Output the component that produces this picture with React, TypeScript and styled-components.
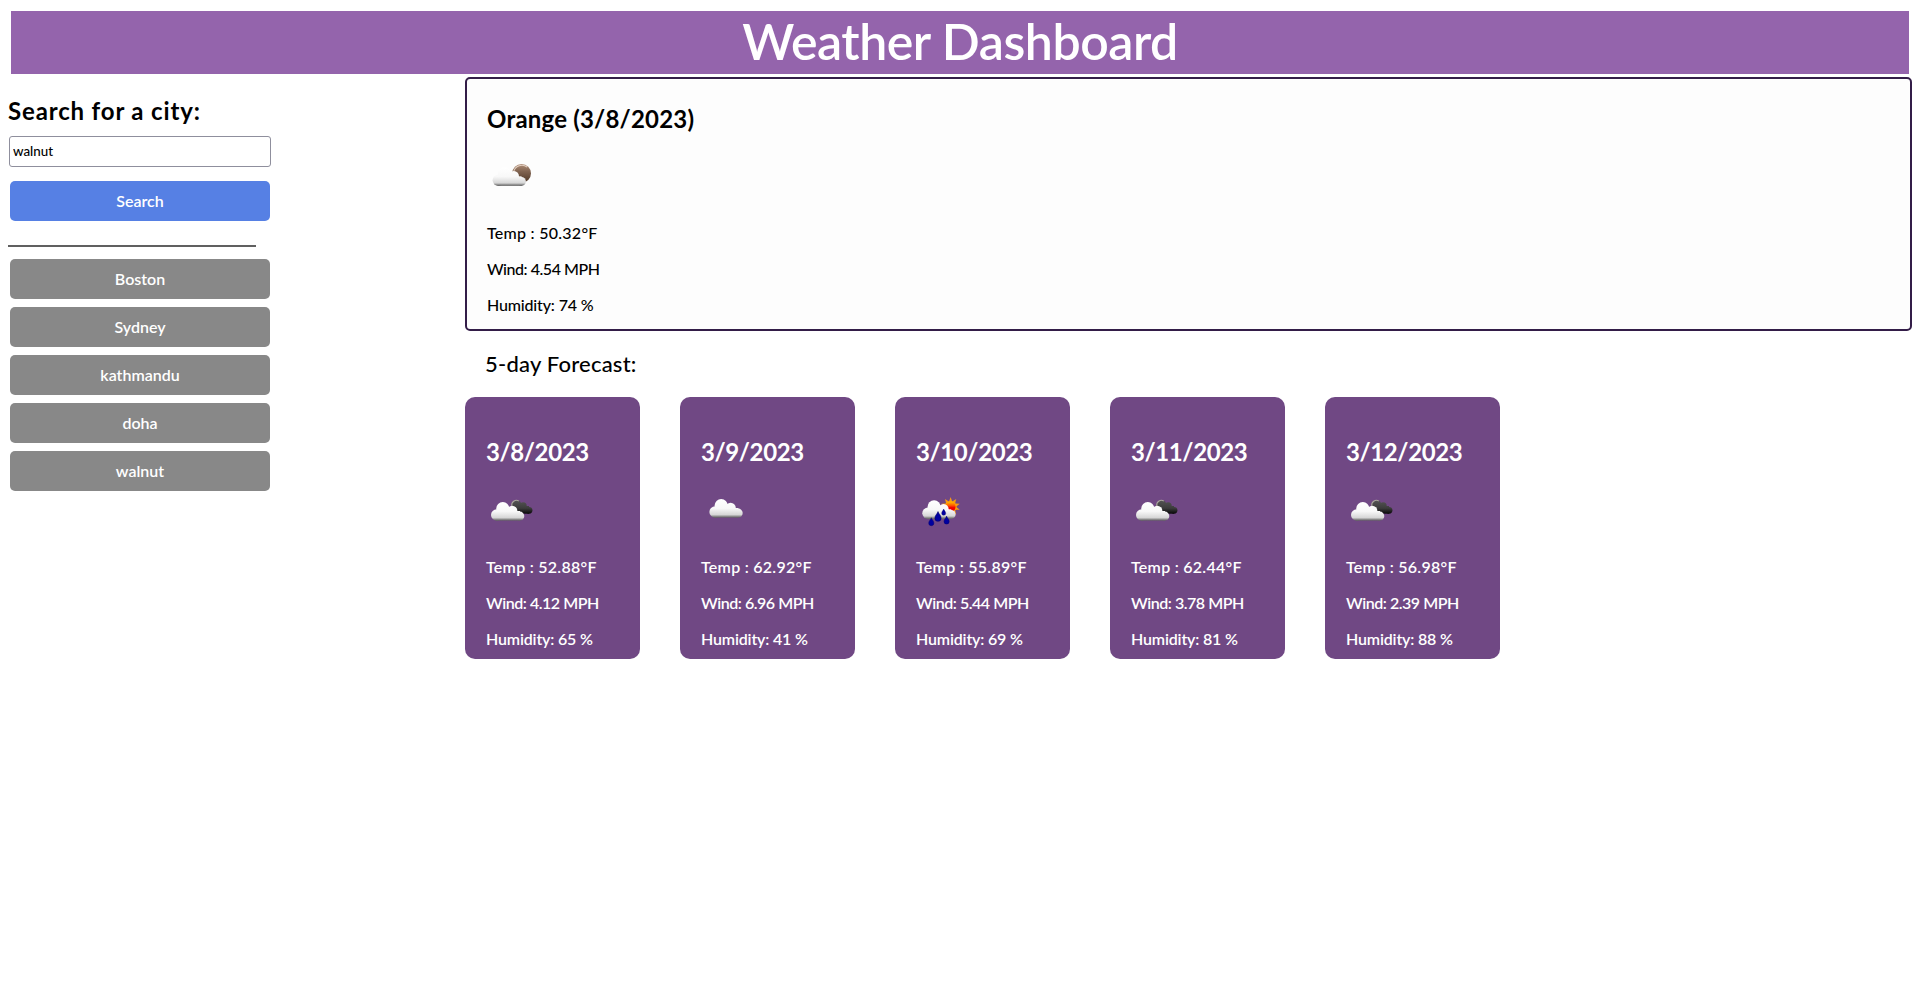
import React from 'react';
import styled, { createGlobalStyle } from 'styled-components';

const GlobalStyle = createGlobalStyle`
  *, *::before, *::after { box-sizing: border-box; }
  body {
    margin: 0;
    background: #fff;
    color: #000;
    font-family: 'Trebuchet MS', Lato, sans-serif;
    font-size: 16px;
  }
  h1, h2, h3, p { margin: 0; padding: 0; }
`;

const Header = styled.header`
  display: flex;
  align-items: center;
  justify-content: center;
  height: 63px;
  margin: 11px 11px 0;
  padding-bottom: 3px;
  background: #9464ac;
  color: #fff;
`;

const Title = styled.h1`
  font-size: 50px;
  font-weight: 600;
  line-height: 60px;
  letter-spacing: -0.45px;
`;

const Layout = styled.main`
  display: flex;
  padding: 3px 8px 0;
`;

const Sidebar = styled.aside`
  flex: 0 0 457px;
  padding-top: 20px;
`;

const SearchForm = styled.form`
  display: flex;
  flex-direction: column;
  width: 264px;
`;

const Heading = styled.h2<{ $tracking: number }>`
  font-size: 24px;
  font-weight: 700;
  line-height: 28px;
  letter-spacing: ${(p) => p.$tracking}px;
`;

const CityInput = styled.input`
  width: 262px;
  height: 31px;
  margin: 11px 1px 14px;
  padding: 0 3px 1px;
  border: 1px solid #8f8f9d;
  border-radius: 3px;
  background: #fff;
  color: #000;
  font: 500 13.33px 'Trebuchet MS', Lato, sans-serif;
`;

const Button = styled.button<{ $primary?: boolean }>`
  width: 260px;
  height: 40px;
  margin-left: 2px;
  padding: 0 0 2px;
  border: 0;
  border-radius: 5px;
  background: ${(p) => (p.$primary ? '#5680e4' : '#888')};
  color: #fff;
  font: 600 16px 'Trebuchet MS', Lato, sans-serif;
`;

const Divider = styled.div`
  width: 248px;
  height: 2px;
  margin: 24px 0 12px;
  background: #606060;
`;

const History = styled.div`
  display: flex;
  flex-direction: column;
  gap: 8px;
`;

const Content = styled.section`
  flex: 1;
`;

const IconSlot = styled.div`
  height: 50px;
  margin: 17px 0 23px;
  svg { display: block; }
`;

const CurrentCard = styled.article`
  height: 254px;
  padding: 26px 20px 13px;
  border: 2px solid #331d48;
  border-radius: 5px;
  background: #fdfdfd;
`;

const Readings = styled.div<{ $weight: number }>`
  display: flex;
  flex-direction: column;
  gap: 16px;
  font-weight: ${(p) => p.$weight};
  line-height: 20px;
  white-space: nowrap;
`;

const Reading = styled.p<{ $tracking: number }>`
  letter-spacing: ${(p) => p.$tracking}px;
`;

const ForecastTitle = styled.h3`
  margin: 20px 0;
  padding-left: 20px;
  font-size: 22px;
  font-weight: 500;
  line-height: 26px;
  letter-spacing: 0.22px;
`;

const Forecast = styled.div`
  display: flex;
  gap: 40px;
`;

const DayCard = styled.article`
  width: 175px;
  height: 262px;
  padding: 41px 0 0 21px;
  border-radius: 10px;
  background: #704884;
  color: #fff;
  ${IconSlot} { margin: 19px 0 22px; }
`;

type IconKind = 'night' | 'broken' | 'cloud' | 'rain';

function Cloud({ x = 0, y = 0, fill }: { x?: number; y?: number; fill: string }) {
  return (
    <g transform={`translate(${x} ${y})`} fill={fill}>
      <circle cx="10.7" cy="30" r="5.7" />
      <circle cx="16.8" cy="23.6" r="6.6" />
      <circle cx="26.2" cy="26" r="5.2" />
      <circle cx="33.8" cy="31.1" r="4.5" />
      <rect x="10" y="26" width="24" height="9.6" />
    </g>
  );
}

function Drop({ x, y, s = 1 }: { x: number; y: number; s?: number }) {
  return (
    <path
      transform={`translate(${x} ${y}) scale(${s})`}
      d="M0-5C.8-2.6 3-1.2 3 1.3A3 3 0 0 1-3 1.3C-3-1.2-.8-2.6 0-5Z"
      fill="#0000a0"
      stroke="#000066"
      strokeWidth=".5"
    />
  );
}

const rays = Array.from({ length: 10 }, (_, i) => i * 36);

function WeatherIcon({ kind, id }: { kind: IconKind; id: string }) {
  const white = `white-${id}`;
  const dark = `dark-${id}`;
  const moon = `moon-${id}`;
  const sun = `sun-${id}`;
  return (
    <svg width="50" height="50" viewBox="0 0 50 50" aria-hidden="true">
      <defs>
        <linearGradient id={white} gradientUnits="userSpaceOnUse" x1="0" y1="17" x2="0" y2="35.7">
          <stop offset="0" stopColor="#fff" />
          <stop offset=".5" stopColor="#f8f8f8" />
          <stop offset=".84" stopColor="#d6d6d6" />
          <stop offset=".93" stopColor="#8c8c8c" />
          <stop offset="1" stopColor="#606060" />
        </linearGradient>
        <linearGradient id={dark} gradientUnits="userSpaceOnUse" x1="0" y1="15" x2="0" y2="28.7">
          <stop offset="0" stopColor="#555" />
          <stop offset=".6" stopColor="#3c3c3c" />
          <stop offset="1" stopColor="#080808" />
        </linearGradient>
        <linearGradient id={moon} x1="0" y1="0" x2="0" y2="1">
          <stop offset="0" stopColor="#b08f78" />
          <stop offset=".4" stopColor="#806350" />
          <stop offset="1" stopColor="#4c3525" />
        </linearGradient>
        <linearGradient id={sun} x1="0" y1="0" x2="0" y2="1">
          <stop offset="0" stopColor="#ffc000" />
          <stop offset=".4" stopColor="#ff5000" />
          <stop offset=".6" stopColor="#f00000" />
        </linearGradient>
      </defs>
      {kind === 'night' && (
        <>
          <circle cx="34.6" cy="23.4" r="9.4" fill={`url(#${moon})`} />
          <path d="M26.6 22a8.4 8.4 0 0 1 13.6-4.8" fill="none" stroke="#e3cfc0" strokeWidth="1.1" />
          <Cloud x={0.6} y={0.3} fill={`url(#${white})`} />
        </>
      )}
      {kind === 'broken' && (
        <>
          <g fill={`url(#${dark})`}>
            <circle cx="30.5" cy="20" r="5" />
            <circle cx="37.2" cy="20.8" r="3.5" />
            <circle cx="43" cy="25.3" r="3.4" />
            <rect x="29" y="21" width="14" height="7.7" />
          </g>
          <path d="M25.8 21a4.8 4.8 0 0 1 7-5.1" fill="none" stroke="#aaa59d" strokeWidth="1.1" />
          <Cloud fill={`url(#${white})`} />
        </>
      )}
      {kind === 'cloud' && <Cloud x={3.4} y={-3} fill={`url(#${white})`} />}
      {kind === 'rain' && (
        <>
          <g transform="translate(34.6 21.7)">
            {rays.map((angle) => (
              <path key={angle} d="M-1.5-5.5 0-9.6 1.5-5.5Z" fill="#f99a12" transform={`rotate(${angle})`} />
            ))}
            <circle r="6" fill="#ffa500" />
            <circle r="5" fill={`url(#${sun})`} />
          </g>
          <Cloud x={1.3} y={-1.7} fill={`url(#${white})`} />
          <Drop x={22} y={31.8} s={1.05} />
          <Drop x={27.7} y={27.4} s={0.68} />
          <Drop x={15.3} y={37} s={0.86} />
          <Drop x={30.6} y={35.4} s={0.86} />
        </>
      )}
    </svg>
  );
}

interface Weather {
  temp: string;
  wind: string;
  humidity: number;
}

function WeatherReadings({ weather, weight }: { weather: Weather; weight: number }) {
  return (
    <Readings $weight={weight}>
      <Reading $tracking={0.26}>Temp : {weather.temp}°F</Reading>
      <Reading $tracking={-0.46}>Wind: {weather.wind} MPH</Reading>
      <Reading $tracking={-0.16}>Humidity: {weather.humidity} %</Reading>
    </Readings>
  );
}

const cities = ['Boston', 'Sydney', 'kathmandu', 'doha', 'walnut'];

const days: (Weather & { date: string; icon: IconKind })[] = [
  { date: '3/8/2023', icon: 'broken', temp: '52.88', wind: '4.12', humidity: 65 },
  { date: '3/9/2023', icon: 'cloud', temp: '62.92', wind: '6.96', humidity: 41 },
  { date: '3/10/2023', icon: 'rain', temp: '55.89', wind: '5.44', humidity: 69 },
  { date: '3/11/2023', icon: 'broken', temp: '62.44', wind: '3.78', humidity: 81 },
  { date: '3/12/2023', icon: 'broken', temp: '56.98', wind: '2.39', humidity: 88 },
];

export default function App() {
  return (
    <>
      <GlobalStyle />
      <Header>
        <Title>Weather Dashboard</Title>
      </Header>
      <Layout>
        <Sidebar>
          <SearchForm onSubmit={(e) => e.preventDefault()}>
            <Heading $tracking={0.85}>Search for a city:</Heading>
            <CityInput defaultValue="walnut" aria-label="City" />
            <Button $primary>Search</Button>
          </SearchForm>
          <Divider />
          <History>
            {cities.map((city) => (
              <Button key={city}>{city}</Button>
            ))}
          </History>
        </Sidebar>
        <Content>
          <CurrentCard>
            <Heading $tracking={0.2}>Orange (3/8/2023)</Heading>
            <IconSlot>
              <WeatherIcon kind="night" id="current" />
            </IconSlot>
            <WeatherReadings weather={{ temp: '50.32', wind: '4.54', humidity: 74 }} weight={500} />
          </CurrentCard>
          <ForecastTitle>5-day Forecast:</ForecastTitle>
          <Forecast>
            {days.map((day) => (
              <DayCard key={day.date}>
                <Heading $tracking={-0.4}>{day.date}</Heading>
                <IconSlot>
                  <WeatherIcon kind={day.icon} id={day.date.replace(/\//g, '-')} />
                </IconSlot>
                <WeatherReadings weather={day} weight={600} />
              </DayCard>
            ))}
          </Forecast>
        </Content>
      </Layout>
    </>
  );
}
